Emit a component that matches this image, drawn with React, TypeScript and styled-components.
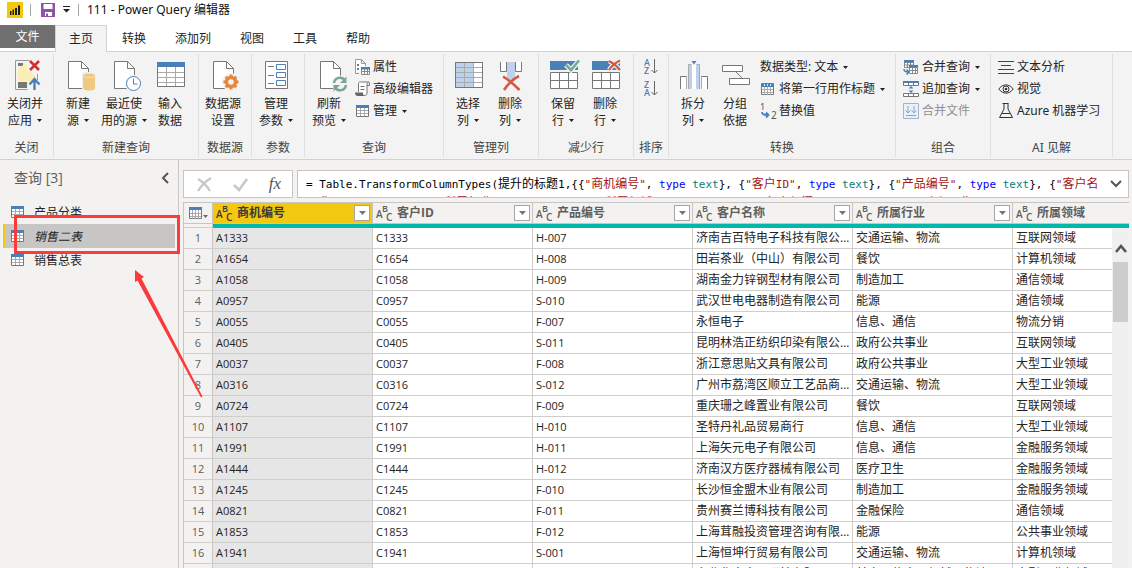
import React from "react";
import styled, { createGlobalStyle, css } from "styled-components";

const UI_FONT = `"Noto Sans", "Noto Sans CJK SC", sans-serif`;
const CELL_FONT = `"Open Sans", "Noto Sans CJK SC", sans-serif`;
const MONO_FONT = `"DejaVu Sans Mono", "Noto Sans CJK SC", monospace`;

const GlobalStyle = createGlobalStyle`
  * { box-sizing: border-box; }
  body { margin: 0; background: #f3f2f1; font-family: ${UI_FONT}; font-size: 12px; color: #252423; overflow: hidden; }
  button { font: inherit; color: inherit; background: none; border: 0; padding: 0; margin: 0; }
  svg { display: block; flex: none; overflow: visible; }
`;

/* ---------- layout ---------- */

const Shell = styled.div`
  position: relative;
  display: flex;
  flex-direction: column;
  height: 100vh;
  overflow: hidden;
`;

const TitleBar = styled.header`
  display: flex;
  align-items: center;
  height: 25px;
  padding: 0 7px 6px;
  background: #fff;
`;

const TitleDivider = styled.span<{ $left: number; $right: number }>`
  width: 1px;
  height: 12px;
  margin: 0 ${(p) => p.$right}px 0 ${(p) => p.$left}px;
  background: #a5a5a5;
`;

const QuickAccess = styled.div`
  display: flex;
  align-items: center;
  gap: 8px;
`;

const Title = styled.h1`
  margin: 0;
  font-size: 12px;
  font-weight: 400;
  line-height: 18px;
  color: #111;
`;

const TabBar = styled.nav`
  display: flex;
  gap: 1px;
  height: 27px;
  background: #fff;
  border-bottom: 1px solid #d2d2d2;
`;

const FileTab = styled.button`
  width: 55px;
  height: 23px;
  margin-right: -1px;
  line-height: 22px;
  background: #6f6f6f;
  color: #fff;
`;

const Tab = styled.button<{ $active?: boolean }>`
  height: 27px;
  padding: 0 13px;
  line-height: 24px;
  border: 1px solid transparent;
  border-bottom: 0;
  ${(p) =>
    p.$active &&
    css`
      background: #f3f3f3;
      border-color: #d2d2d2;
    `}
`;

const Ribbon = styled.div`
  display: flex;
  padding: 2px 0;
  background: #f3f3f3;
  border-bottom: 1px solid #d2d2d2;
`;

const Group = styled.section<{ $width: number; $pad: number }>`
  display: flex;
  flex-direction: column;
  flex: none;
  width: ${(p) => p.$width}px;
  height: 103px;
  border-right: 1px solid #dfdfdf;
  & > div {
    padding-left: ${(p) => p.$pad}px;
  }
`;

const GroupBody = styled.div`
  display: flex;
  flex: 1;
`;

const GroupLabel = styled.h2`
  margin: 0;
  font-size: 12px;
  font-weight: 400;
  line-height: 18px;
  text-align: center;
  color: #444;
`;

const BigButton = styled.button<{ $width: number }>`
  display: flex;
  flex-direction: column;
  align-items: center;
  width: ${(p) => p.$width}px;
  padding-top: 6px;
  line-height: 17px;
  white-space: nowrap;
  & > svg {
    margin-bottom: 3px;
  }
`;

const LabelLine = styled.span`
  display: flex;
  align-items: center;
  gap: 5px;
`;

const SmallList = styled.div<{ $left?: number }>`
  display: flex;
  flex-direction: column;
  align-items: flex-start;
  padding-top: 2px;
  margin-left: ${(p) => p.$left ?? 0}px;
`;

const SmallButton = styled.button<{ $gap: number }>`
  display: flex;
  align-items: center;
  gap: ${(p) => p.$gap}px;
  height: 22px;
  line-height: 18px;
  white-space: nowrap;
  &:disabled {
    color: #8f8f8f;
  }
`;

const SortList = styled.div`
  display: flex;
  flex: 1;
  flex-direction: column;
  align-items: center;
  gap: 5px;
  padding-top: 4px;
`;

const Body = styled.div`
  display: flex;
  flex: 1;
  min-height: 0;
`;

const Sidebar = styled.aside`
  flex: none;
  width: 179px;
  border-right: 1px solid #c8c6c4;
`;

const SidebarHead = styled.div`
  display: flex;
  align-items: center;
  justify-content: space-between;
  height: 36px;
  margin-bottom: 4px;
  padding: 0 9px 0 14px;
`;

const SidebarTitle = styled.h2`
  margin: 0;
  font-family: ${CELL_FONT};
  font-size: 14px;
  font-weight: 400;
  line-height: 20px;
  color: #605e5c;
`;

const QueryList = styled.ul`
  margin: 0;
  padding: 0 3px;
  list-style: none;
`;

const QueryItem = styled.button<{ $selected?: boolean }>`
  display: flex;
  align-items: center;
  gap: 10px;
  width: 100%;
  height: 24px;
  padding-left: 6px;
  border-left: 2px solid transparent;
  ${(p) =>
    p.$selected &&
    css`
      background: #c8c6c4;
      border-color: #f2c811;
      font-style: italic;
    `}
`;

const Main = styled.main`
  display: flex;
  flex: 1;
  flex-direction: column;
  min-width: 0;
  padding: 10px 3px 0 4px;
`;

const FormulaRow = styled.div`
  display: flex;
  flex: none;
  gap: 4px;
  height: 28px;
  margin-bottom: 4px;
`;

const FormulaActions = styled.div`
  display: flex;
  flex: none;
  align-items: center;
  justify-content: space-between;
  width: 110px;
  padding: 0 10px 0 13px;
  background: #fff;
  border: 1px solid #c8c6c4;
`;

const FxLabel = styled.button`
  width: 14px;
  font-family: "Liberation Serif", serif;
  font-style: italic;
  font-size: 17px;
  line-height: 20px;
  color: #555;
`;

const FormulaBox = styled.div`
  display: flex;
  flex: 1;
  min-width: 0;
  background: #fff;
  border: 1px solid #c8c6c4;
`;

const FormulaText = styled.div`
  flex: 1;
  min-width: 0;
  padding: 4px 0 0 8px;
  overflow: hidden;
  font-family: ${MONO_FONT};
  font-size: 11px;
  line-height: 19px;
  white-space: pre;
  color: #000;
  outline: 0;
`;

const FormulaLine = styled.div`
  height: 19px;
`;

const Han = styled.span`
  font-size: 12px;
`;
const Str = styled.span`
  color: #a31515;
`;
const Keyword = styled.span`
  color: #0000ff;
`;
const TypeName = styled.span`
  color: #008080;
`;

const ExpandButton = styled.button`
  display: flex;
  flex: none;
  align-items: center;
  justify-content: center;
  width: 24px;
`;

const Grid = styled.div`
  position: relative;
  flex: 1;
  min-height: 0;
  overflow: hidden;
  border-left: 1px solid #c8c6c4;
  border-top: 1px solid #c8c6c4;
  font-family: ${CELL_FONT};
`;

const Table = styled.table`
  width: 989px;
  table-layout: fixed;
  border-collapse: separate;
  border-spacing: 0;
`;

const NumberCol = styled.col`
  width: 29px;
`;

const DataCol = styled.col`
  width: 160px;
`;

const HeadCell = styled.th<{ $selected?: boolean }>`
  height: 21px;
  padding: 0 2px 0 3px;
  border-right: 1px solid #c8c6c4;
  border-bottom: 1px solid #c8c6c4;
  background: ${(p) => (p.$selected ? "#f2c811" : "#f3f2f1")};
  color: ${(p) => (p.$selected ? "#3b3a39" : "#605e5c")};
  font-size: 12px;
  font-weight: 700;
  line-height: 20px;
  text-align: left;
`;

const HeadInner = styled.div`
  display: flex;
  align-items: center;
  gap: 4px;
  height: 20px;
`;

const HeadName = styled.span`
  flex: 1;
`;

const FilterButton = styled.button`
  display: flex;
  align-items: center;
  justify-content: center;
  width: 16px;
  height: 16px;
  background: #fff;
  border: 1px solid #a6a6a6;
`;

const Quality = styled.td<{ $blank?: boolean }>`
  height: 4px;
  padding: 0;
  background: ${(p) => (p.$blank ? "#f3f2f1" : "#01b8aa")};
  ${(p) =>
    p.$blank &&
    css`
      border-right: 1px solid #c8c6c4;
      border-bottom: 1px solid #d0cecc;
    `}
`;

const RowNumber = styled.th`
  height: 21px;
  padding: 0;
  border-right: 1px solid #c8c6c4;
  border-bottom: 1px solid #d0cecc;
  background: #f3f2f1;
  color: #605e5c;
  font-size: 11px;
  font-weight: 400;
  line-height: 20px;
  text-align: center;
`;

const Cell = styled.td<{ $selected?: boolean; $latin?: boolean }>`
  height: 21px;
  padding: 0 1px 0 3px;
  overflow: hidden;
  border-right: 1px solid #d0cecc;
  border-bottom: 1px solid #d0cecc;
  background: ${(p) => (p.$selected ? "#e6e6e6" : "#fff")};
  font-size: ${(p) => (p.$latin ? 11 : 12)}px;
  line-height: 20px;
  text-overflow: ellipsis;
  white-space: nowrap;
`;

const ScrollBar = styled.div`
  position: absolute;
  top: 25px;
  right: 0;
  bottom: 0;
  display: flex;
  flex-direction: column;
  align-items: center;
  width: 17px;
  background: #f0f0f0;
`;

const ScrollUp = styled.button`
  padding: 16px 0 8px;
`;

const ScrollThumb = styled.div`
  width: 15px;
  height: 60px;
  background: #cdcdcd;
`;

const Annotation = styled.svg`
  position: absolute;
  left: 0;
  top: 0;
  pointer-events: none;
`;

/* ---------- icons ---------- */

const GREY = "#777";
const BLUE = "#4a80b8";
const PALE = "#bdd2ea";
const RED = "#d25a40";
const GREEN = "#78a793";
const PURPLE = "#8a55a8";

const Big = ({ children }: { children: React.ReactNode }) => (
  <svg width="36" height="32" fill="none" stroke={GREY} aria-hidden="true">
    {children}
  </svg>
);

const DocShape = () => (
  <>
    <path d="M8.5 1.5h13l7 7v20h-20z" fill="#fff" />
    <path d="M21.5 1.5v7h7" />
  </>
);

const CloseApplyIcon = () => (
  <Big>
    <path d="M8.5 29.5v-29h14M8.5 29.5h12M30.5 14v6" stroke="#999" />
    <path d="M11 3h5v3h-5zM11 22h9v6h-9z" fill={GREY} stroke="none" />
    <path d="M11 8l9-5 0 7 8 5v8l-7 0v-2H11z" fill="#fbeeb4" stroke="none" />
    <path d="M23 1l9 9M32 1l-9 9" stroke="#cf2f2f" strokeWidth="2.6" />
    <path d="M27.5 30V20M22.5 24.5l5-5.5 5 5.5" stroke={BLUE} strokeWidth="2.4" />
  </Big>
);

const NewSourceIcon = () => (
  <Big>
    <DocShape />
    <path d="M22 12h14v20H22z" fill="#f3f3f3" stroke="none" />
    <path d="M23 15v13c0 3.5 12 3.5 12 0V15z" fill="#efc981" stroke="none" />
    <ellipse cx="29" cy="15.5" rx="6" ry="2.2" fill="#efc981" stroke="#f7e2b8" />
  </Big>
);

const RecentIcon = () => (
  <Big>
    <DocShape />
    <circle cx="27.5" cy="23.5" r="8.5" fill="#f3f3f3" stroke="none" />
    <circle cx="27.5" cy="23.5" r="7" fill="#fff" stroke={BLUE} />
    <path d="M27.5 18.5v5.5h4" stroke={BLUE} />
  </Big>
);

const EnterDataIcon = () => (
  <Big>
    <path d="M5.5 2.5h27v24h-27z" fill="#fff" />
    <path d="M14.5 7v19M23.5 7v19M6 12.5h26M6 17.5h26M6 22.5h26" stroke="#aaa" />
    <path d="M5 2h28v5H5z" fill={BLUE} stroke="none" />
  </Big>
);

const SourceSettingsIcon = () => (
  <Big>
    <DocShape />
    <circle cx="26" cy="22" r="9" fill="#f3f3f3" stroke="none" />
    <circle cx="26" cy="22" r="4.5" stroke="#e4883f" strokeWidth="3.4" />
    <path
      d="M26 14.500v3M26 26.500v3M18.500 22h3M30.500 22h3M20.700 16.700l2 2M29.300 25.300l2 2M31.300 16.700l-2 2M22.700 25.300l-2 2"
      stroke="#e4883f"
      strokeWidth="3"
    />
  </Big>
);

const ParamsIcon = () => (
  <Big>
    <path d="M7.5 1.5h22v27h-22z" fill="#fff" />
    <path d="M10 6.5h6M10 15.5h6M10 23.5h6" />
    <path d="M18.5 4.5h9v5h-9zM18.5 12.5h9v5h-9zM18.5 20.5h9v5h-9z" stroke={BLUE} />
  </Big>
);

const RefreshIcon = () => (
  <Big>
    <path d="M9.5 1.5h13l7 7v20h-20z" fill="#fff" />
    <path d="M22.5 1.5v7h7" />
    <circle cx="29" cy="24" r="8.5" fill="#f3f3f3" stroke="none" />
    <path d="M23 23c1-6 8-7 11-2.5M35 25c-1 6-8 7-11 2.5" stroke={GREEN} strokeWidth="2.4" />
    <path d="M35.5 16.500v6.500h-6.500zM22.500 31.500v-6.500h6.500z" fill={GREEN} stroke="none" />
  </Big>
);

const SelectColumnsIcon = () => (
  <Big>
    <path d="M5.5 2.5h27v25h-27z" fill="#fff" />
    <path d="M6 3h18v24H6z" fill={PALE} stroke="none" />
    <path d="M14.5 3v24M23.5 3v24M6 7.5h26M6 12.5h26M6 17.5h26M6 22.5h26" stroke="#aaa" />
    <path d="M5.5 2.5h27v25h-27z" />
  </Big>
);

const RemoveColumnsIcon = () => (
  <Big>
    <path d="M8.5 2v9.5h6V2M23.5 2v9.5h6V2" fill="#fff" />
    <path d="M15 2h8v16l-4 3-4-3z" fill={PALE} stroke="none" />
    <path d="M11 16.5c5 3 10 7 16.5 13.5M27 16c-6 3-11 8-15 14" stroke={RED} strokeWidth="2.6" />
  </Big>
);

const RowsBase = () => (
  <>
    <path d="M5 1h28v9H5z" fill={BLUE} stroke="none" />
    <path d="M5.5 12.5h27v16h-27zM14.5 12.5v16M23.5 12.5v16M5.5 20.5h27" fill="#fff" />
  </>
);

const KeepRowsIcon = () => (
  <Big>
    <RowsBase />
    <path d="M21 5l5 5 8-9" stroke="#f3f3f3" strokeWidth="5" />
    <path d="M21 5l5 5 8-9.5" stroke={GREEN} strokeWidth="2.6" />
  </Big>
);

const RemoveRowsIcon = () => (
  <Big>
    <RowsBase />
    <path d="M22 1c4 2 8 5 11 9M33 .5c-4 2-8 5-11 9.5" stroke="#f3f3f3" strokeWidth="4.5" />
    <path d="M22 1c4 2 8 5 11 9M33 .5c-4 2-8 5-11 9.5" stroke={RED} strokeWidth="2.2" />
  </Big>
);

const SplitIcon = () => (
  <Big>
    <path d="M5.5 29V16.5h6V29M26.5 29V16.5h6V29" fill="#fff" />
    <path d="M13 29V5h12v24z" fill={PALE} stroke="none" />
    <path d="M17 29V5h4v24z" fill="#fff" stroke="none" />
    <path d="M13.5 29V4.5h3M24.5 29V4.5h-3M11.5 16.5v12.5M26.5 16.5v12.5" stroke="#aaa" />
    <path d="M16.5 1h5L19 4.5z" fill={BLUE} stroke="none" />
  </Big>
);

const GroupByIcon = () => (
  <Big>
    <path d="M5.5 5.5h20v6h-20zM12.5 18.5h20v6h-20z" fill="#fff" />
    <path d="M19 12l6 6" />
  </Big>
);

const Small = ({ w = 16, children }: { w?: number; children: React.ReactNode }) => (
  <svg width={w} height="16" fill="none" stroke={GREY} aria-hidden="true">
    {children}
  </svg>
);

const TableShape = () => (
  <>
    <path d="M.5 1.5h12v11H.5z" fill="#fff" stroke="#777" />
    <path d="M4.5 4v8M8.5 4v8M1 6.5h11M1 9.5h11" stroke="#aaa" />
    <path d="M0 1h13v3H0z" fill={BLUE} stroke="none" />
  </>
);

const TableIcon = () => (
  <svg width="13" height="14" fill="none" aria-hidden="true">
    <TableShape />
  </svg>
);

const ManageIcon = () => (
  <Small w={18}>
    <g transform="translate(2 1)">
      <TableShape />
    </g>
  </Small>
);

const PropertiesIcon = () => (
  <Small w={18}>
    <path d="M1.5 14.5V.5h6l4 4V7M7.5 .5v4h4M1.5 14.5H5" stroke="#999" fill="#fff" />
    <path d="M3 5h2v2H3zM3 9h2v2H3z" fill="#777" stroke="none" />
    <path d="M7.5 9.5h8v6h-8zM10.5 10v6M13.5 10v6M8 12.5h8" stroke="#888" fill="#fff" />
    <path d="M7 8h9v2.5H7z" fill={BLUE} stroke="none" />
  </Small>
);

const EditorIcon = () => (
  <Small w={18}>
    <path d="M4.5 11V2.5c0-1.5 1-1.5 2-1.5h8c-1.5 1-1.5 2-1.5 3v8c0 2-1 2.5-3 2.5" fill="#fff" />
    <path d="M13 4.5h2.5V2c0-1-1-1-1-1M6.500 5.500h4M6.500 8.500h4" />
    <path d="M1 11.5h8c0 2 .5 3 1.5 3.5H4c-2 0-3-1-3-3.5z" fill="#666" stroke="none" />
  </Small>
);

const HeadersIcon = () => (
  <Small>
    <path d="M1.5 2.5h12v11h-12z" fill="#fff" />
    <path d="M4.5 5v9M7.5 5v9M10.5 5v9M2 8.5h11M2 11.5h11" stroke="#aaa" />
    <path d="M2 3h11v3H2z" fill={BLUE} stroke="none" />
    <path d="M4.5 3v2M7.5 3v2M10.5 3v2" stroke="#dce8f4" />
  </Small>
);

const ReplaceIcon = () => (
  <svg width="18" height="18" aria-hidden="true">
    <text x="0" y="8" fontSize="9" fill="#555">1</text>
    <text x="11" y="17" fontSize="10" fill="#555">2</text>
    <path d="M2 10c0 2.5 1.5 3 6 3M6 10.5l2.5 2.5L6 15.5" fill="none" stroke={BLUE} strokeWidth="1.8" />
  </svg>
);

const MergeIcon = () => (
  <Small>
    <path d="M1.5 3.5h9v5h-9zM4.5 4v4M7.5 4v4M1 6h9" stroke="#888" fill="#fff" />
    <path d="M1 1h10v2.5H1z" fill={BLUE} stroke="none" />
    <path d="M6.5 8.5h8v6h-8zM9.5 9v6M12.5 9v6M7 11.5h8" stroke="#888" fill="#fff" />
    <path d="M6 6h9v2.5H6z" fill={BLUE} stroke="none" />
    <path d="M1 10c0 2.5 1 3 4 3M3.5 10.5L6 13l-2.5 2.5" stroke={BLUE} strokeWidth="1.5" />
  </Small>
);

const AppendIcon = () => (
  <Small>
    <path d="M.5 1.5v3h15v-3M5.5 2v2M10.5 2v2" fill="#fff" />
    <path d="M0 0h16v2H0z" fill={BLUE} stroke="none" />
    <path d="M.5 12.5h15v3H.5zM5.5 13v2M10.5 13v2" fill="#fff" />
    <path d="M5.5 7.5L8 5l2.5 2.5zM5.5 9.500L8 12l2.5-2.5z" fill={BLUE} stroke="none" />
  </Small>
);

const CombineFilesIcon = () => (
  <Small>
    <path d="M.5 .5h15v15H.5z" fill="#eaf0f8" stroke="#9fb4d2" />
    <path d="M5 3v7M2.5 7.5L5 10l2.5-2.5M11 3v7M8.5 7.5L11 10l2.5-2.5M3 12.5h10" stroke="#8ba4c8" />
  </Small>
);

const LinesIcon = () => (
  <Small>
    <path d="M0 2.5h16M3 6.5h10M0 10.5h16M0 14.5h16" stroke="#444" />
  </Small>
);

const EyeIcon = () => (
  <Small>
    <path d="M.8 8c4-5.5 10.4-5.5 14.4 0-4 5.5-10.4 5.5-14.4 0z" stroke="#333" />
    <circle cx="8" cy="8" r="3" stroke="#333" />
    <circle cx="8" cy="8" r="1.3" fill="#333" stroke="none" />
  </Small>
);

const FlaskIcon = () => (
  <Small>
    <path d="M4.5 .5h6M6 .5V6L1.5 14.5h13L10 6V.5M4 10.5h8" stroke="#333" />
  </Small>
);

const SortIcon = ({ up, down }: { up: string; down: string }) => (
  <svg width="14" height="17" fontSize="9" fontWeight="500" aria-hidden="true">
    <text x="0" y="8" fill={up === "A" ? BLUE : PURPLE}>{up}</text>
    <text x="0" y="16" fill={down === "A" ? BLUE : PURPLE}>{down}</text>
    <path d="M10.5 1v14M7.5 12l3 3 3-3" fill="none" stroke="#666" />
  </svg>
);

const TextTypeIcon = () => (
  <svg width="17" height="18" fill="currentColor" fontSize="10" fontWeight="600" aria-hidden="true">
    <text x="0" y="14">A</text>
    <text x="6" y="8" fontSize="9">B</text>
    <text x="10" y="17">C</text>
  </svg>
);

const Caret = () => (
  <svg width="5" height="3" aria-hidden="true">
    <path d="M0 0h5L2.5 3z" fill="#222" />
  </svg>
);

const LogoIcon = () => (
  <svg width="16" height="16" aria-hidden="true">
    <path d="M0 0h16v16H0z" fill="#f2c811" />
    <path d="M3 9h1.5v4H3zM5.5 7.5H7V13H5.5zM8 6h2v7H8zM11 3.5h2V13h-2z" fill="#221f10" />
  </svg>
);

const SaveIcon = () => (
  <svg width="14" height="14" fill="none" aria-hidden="true">
    <path d="M0 0h14v14H0z" fill={PURPLE} />
    <path d="M2.5 1h9v5h-9zM4 9h7v4H4z" fill="#fff" />
    <path d="M5 10.5h2V13H5z" fill={PURPLE} />
  </svg>
);

const MenuCaret = () => (
  <svg width="7" height="7" aria-hidden="true">
    <path d="M0 0h7v1H0zM0 3h7L3.5 6.500z" fill="#222" />
  </svg>
);

/* ---------- pieces ---------- */

type BigProps = { icon: React.ReactNode; lines: [string, string]; menu?: boolean; width?: number };

const RibbonButton = ({ icon, lines, menu, width = 46 }: BigProps) => (
  <BigButton $width={width}>
    {icon}
    <LabelLine>{lines[0]}</LabelLine>
    <LabelLine>
      {lines[1]}
      {menu && <Caret />}
    </LabelLine>
  </BigButton>
);

type SmallProps = { icon?: React.ReactNode; label: string; menu?: boolean; gap?: number; disabled?: boolean };

const ListButton = ({ icon, label, menu, gap = 3, disabled }: SmallProps) => (
  <SmallButton $gap={gap} disabled={disabled}>
    {icon}
    <LabelLine>
      {label}
      {menu && <Caret />}
    </LabelLine>
  </SmallButton>
);

type GroupProps = { label: string; width: number; pad?: number; children: React.ReactNode };

const RibbonGroup = ({ label, width, pad = 0, children }: GroupProps) => (
  <Group $width={width} $pad={pad} aria-label={label}>
    <GroupBody>{children}</GroupBody>
    <GroupLabel>{label}</GroupLabel>
  </Group>
);

const TextType = () => (
  <>
    <Keyword>type</Keyword> <TypeName>text</TypeName>
  </>
);

const Field = ({ han, latin = "" }: { han: string; latin?: string }) => (
  <>
    {"{"}
    <Str>
      "<Han>{han}</Han>
      {latin}"
    </Str>
    , <TextType />
    {"}, "}
  </>
);

/* ---------- data ---------- */

const columns = ["商机编号", "客户ID", "产品编号", "客户名称", "所属行业", "所属领域"];

const rows = [
  ["A1333", "C1333", "H-007", "济南吉百特电子科技有限公司", "交通运输、物流", "互联网领域"],
  ["A1654", "C1654", "H-008", "田岩茶业（中山）有限公司", "餐饮", "计算机领域"],
  ["A1058", "C1058", "H-009", "湖南金力锌钢型材有限公司", "制造加工", "通信领域"],
  ["A0957", "C0957", "S-010", "武汉世电电器制造有限公司", "能源", "通信领域"],
  ["A0055", "C0055", "F-007", "永恒电子", "信息、通信", "物流分销"],
  ["A0405", "C0405", "S-011", "昆明林浩正纺织印染有限公司", "政府公共事业", "互联网领域"],
  ["A0037", "C0037", "F-008", "浙江意思贴文具有限公司", "政府公共事业", "大型工业领域"],
  ["A0316", "C0316", "S-012", "广州市荔湾区顺立工艺品商行", "交通运输、物流", "大型工业领域"],
  ["A0724", "C0724", "F-009", "重庆珊之峰置业有限公司", "餐饮", "互联网领域"],
  ["A1107", "C1107", "H-010", "圣特丹礼品贸易商行", "信息、通信", "大型工业领域"],
  ["A1991", "C1991", "H-011", "上海矢元电子有限公司", "信息、通信", "金融服务领域"],
  ["A1444", "C1444", "H-012", "济南汉方医疗器械有限公司", "医疗卫生", "金融服务领域"],
  ["A1245", "C1245", "F-010", "长沙恒金盟木业有限公司", "制造加工", "金融服务领域"],
  ["A0821", "C0821", "F-011", "贵州赛兰博科技有限公司", "金融保险", "通信领域"],
  ["A1853", "C1853", "F-012", "上海茸融投资管理咨询有限公司", "能源", "公共事业领域"],
  ["A1941", "C1941", "S-001", "上海恒坤行贸易有限公司", "交通运输、物流", "计算机领域"],
  ["A0602", "C0602", "S-002", "东北华中电易联技有限公司", "其它、信息、机械、物流", "大型工业领域"],
];

const queries = ["产品分类", "销售二表", "销售总表"];

export default function App() {
  return (
    <Shell>
      <GlobalStyle />
      <TitleBar>
        <LogoIcon />
        <TitleDivider $left={7} $right={10} />
        <QuickAccess>
          <button aria-label="保存"><SaveIcon /></button>
          <button aria-label="自定义快速访问工具栏"><MenuCaret /></button>
        </QuickAccess>
        <TitleDivider $left={8} $right={8} />
        <Title>111 - Power Query 编辑器</Title>
      </TitleBar>
      <TabBar aria-label="功能区">
        <FileTab>文件</FileTab>
        <Tab $active>主页</Tab>
        <Tab>转换</Tab>
        <Tab>添加列</Tab>
        <Tab>视图</Tab>
        <Tab>工具</Tab>
        <Tab>帮助</Tab>
      </TabBar>
      <Ribbon>
        <RibbonGroup label="关闭" width={54} pad={2}>
          <RibbonButton icon={<CloseApplyIcon />} lines={["关闭并", "应用"]} menu />
        </RibbonGroup>
        <RibbonGroup label="新建查询" width={145} pad={1}>
          <RibbonButton icon={<NewSourceIcon />} lines={["新建", "源"]} menu />
          <RibbonButton icon={<RecentIcon />} lines={["最近使", "用的源"]} menu />
          <RibbonButton icon={<EnterDataIcon />} lines={["输入", "数据"]} />
        </RibbonGroup>
        <RibbonGroup label="数据源" width={53} pad={1}>
          <RibbonButton icon={<SourceSettingsIcon />} lines={["数据源", "设置"]} />
        </RibbonGroup>
        <RibbonGroup label="参数" width={53} pad={1}>
          <RibbonButton icon={<ParamsIcon />} lines={["管理", "参数"]} menu />
        </RibbonGroup>
        <RibbonGroup label="查询" width={139} pad={1}>
          <RibbonButton icon={<RefreshIcon />} lines={["刷新", "预览"]} menu />
          <SmallList $left={2}>
            <ListButton icon={<PropertiesIcon />} label="属性" gap={1} />
            <ListButton icon={<EditorIcon />} label="高级编辑器" gap={1} />
            <ListButton icon={<ManageIcon />} label="管理" gap={1} menu />
          </SmallList>
        </RibbonGroup>
        <RibbonGroup label="管理列" width={95} pad={3}>
          <RibbonButton icon={<SelectColumnsIcon />} lines={["选择", "列"]} width={42} menu />
          <RibbonButton icon={<RemoveColumnsIcon />} lines={["删除", "列"]} width={42} menu />
        </RibbonGroup>
        <RibbonGroup label="减少行" width={95} pad={3}>
          <RibbonButton icon={<KeepRowsIcon />} lines={["保留", "行"]} width={42} menu />
          <RibbonButton icon={<RemoveRowsIcon />} lines={["删除", "行"]} width={42} menu />
        </RibbonGroup>
        <RibbonGroup label="排序" width={35}>
          <SortList>
            <button aria-label="升序排序"><SortIcon up="A" down="Z" /></button>
            <button aria-label="降序排序"><SortIcon up="Z" down="A" /></button>
          </SortList>
        </RibbonGroup>
        <RibbonGroup label="转换" width={227} pad={3}>
          <RibbonButton icon={<SplitIcon />} lines={["拆分", "列"]} width={42} menu />
          <RibbonButton icon={<GroupByIcon />} lines={["分组", "依据"]} width={42} />
          <SmallList $left={4}>
            <ListButton label="数据类型: 文本" menu />
            <ListButton icon={<HeadersIcon />} label="将第一行用作标题" menu />
            <ListButton icon={<ReplaceIcon />} label="替换值" gap={1} />
          </SmallList>
        </RibbonGroup>
        <RibbonGroup label="组合" width={95} pad={7}>
          <SmallList>
            <ListButton icon={<MergeIcon />} label="合并查询" menu />
            <ListButton icon={<AppendIcon />} label="追加查询" menu />
            <ListButton icon={<CombineFilesIcon />} label="合并文件" disabled />
          </SmallList>
        </RibbonGroup>
        <RibbonGroup label="AI 见解" width={122} pad={7}>
          <SmallList>
            <ListButton icon={<LinesIcon />} label="文本分析" />
            <ListButton icon={<EyeIcon />} label="视觉" />
            <ListButton icon={<FlaskIcon />} label="Azure 机器学习" />
          </SmallList>
        </RibbonGroup>
      </Ribbon>
      <Body>
        <Sidebar>
          <SidebarHead>
            <SidebarTitle>查询 [3]</SidebarTitle>
            <button aria-label="折叠">
              <svg width="8" height="12" aria-hidden="true">
                <path d="M7 1L2 6l5 5" fill="none" stroke="#555" strokeWidth="2" />
              </svg>
            </button>
          </SidebarHead>
          <QueryList>
            {queries.map((name, i) => (
              <li key={name}>
                <QueryItem $selected={i === 1}>
                  <TableIcon />
                  {name}
                </QueryItem>
              </li>
            ))}
          </QueryList>
        </Sidebar>
        <Main>
          <FormulaRow>
            <FormulaActions>
              <button aria-label="取消">
                <svg width="15" height="15" aria-hidden="true">
                  <path d="M1 2c5 3 9 7 12 12M14 1C9 4 4 9 1 14" fill="none" stroke="#c8c8c8" strokeWidth="2.4" />
                </svg>
              </button>
              <button aria-label="确认">
                <svg width="15" height="15" aria-hidden="true">
                  <path d="M1 8l5 5 8-11" fill="none" stroke="#c8c8c8" strokeWidth="2.6" />
                </svg>
              </button>
              <FxLabel>fx</FxLabel>
            </FormulaActions>
            <FormulaBox>
              <FormulaText role="textbox" aria-label="公式" aria-multiline="true" tabIndex={0}>
                <FormulaLine>
                  = Table.TransformColumnTypes(<Han>提升的标题</Han>1,{"{"}
                  <Field han="商机编号" />
                  <Field han="客户" latin="ID" />
                  <Field han="产品编号" />
                  {"{"}
                  <Str>"<Han>客户名</Han></Str>
                </FormulaLine>
                <FormulaLine>
                  {"  "}
                  <Str><Han>称</Han>"</Str>, <TextType />{"}, "}
                  <Field han="所属行业" />
                  <Field han="所属领域" />
                  <Field han="负责部门" />
                  <Field han="商机日期" />
                </FormulaLine>
              </FormulaText>
              <ExpandButton aria-label="展开">
                <svg width="12" height="8" aria-hidden="true">
                  <path d="M1 1l5 5 5-5" fill="none" stroke="#555" strokeWidth="2" />
                </svg>
              </ExpandButton>
            </FormulaBox>
          </FormulaRow>
          <Grid>
            <Table>
              <colgroup>
                <NumberCol />
                {columns.map((c) => (
                  <DataCol key={c} />
                ))}
              </colgroup>
              <thead>
                <tr>
                  <HeadCell aria-label="表">
                    <svg width="22" height="14" fill="none" aria-hidden="true">
                      <path d="M2.5 1.5h12v11h-12z" fill="#fff" stroke="#777" />
                      <path d="M5.5 4v9M8.5 4v9M11.5 4v9M3 7.5h11M3 10.5h11" stroke="#aaa" />
                      <path d="M2 1h13v3H2z" fill={BLUE} />
                      <path d="M16 9h5l-2.5 3z" fill="#666" />
                    </svg>
                  </HeadCell>
                  {columns.map((c, i) => (
                    <HeadCell key={c} $selected={i === 0} scope="col">
                      <HeadInner>
                        <TextTypeIcon />
                        <HeadName>{c}</HeadName>
                        <FilterButton aria-label={`筛选${c}`}>
                          <svg width="7" height="4" aria-hidden="true">
                            <path d="M0 0h7L3.5 4z" fill="#777" />
                          </svg>
                        </FilterButton>
                      </HeadInner>
                    </HeadCell>
                  ))}
                </tr>
                <tr>
                  <Quality $blank />
                  <Quality colSpan={6} />
                </tr>
              </thead>
              <tbody>
                {rows.map((row, r) => (
                  <tr key={row[0]}>
                    <RowNumber scope="row">{r + 1}</RowNumber>
                    {row.map((value, i) => (
                      <Cell key={columns[i]} $selected={i === 0} $latin={i < 3}>
                        {value}
                      </Cell>
                    ))}
                  </tr>
                ))}
              </tbody>
            </Table>
            <ScrollBar>
              <ScrollUp aria-label="向上滚动">
                <svg width="12" height="10" aria-hidden="true">
                  <path d="M1 8l5-6 5 6" fill="none" stroke="#555" strokeWidth="2.6" />
                </svg>
              </ScrollUp>
              <ScrollThumb />
            </ScrollBar>
          </Grid>
        </Main>
      </Body>
      <Annotation width="210" height="400" aria-hidden="true">
        <rect x="15.5" y="216.5" width="163" height="36" fill="none" stroke="#fb3b3b" strokeWidth="3" />
        <path d="M135 270l9 7-2.500 1.500L202.500 396.500 201 397.500 137.500 280.500l-2.500 1.500z" fill="#fb3b3b" />
      </Annotation>
    </Shell>
  );
}
